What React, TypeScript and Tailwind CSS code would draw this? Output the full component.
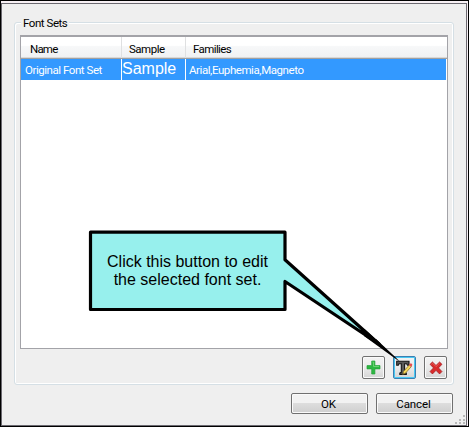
import type { ReactNode } from 'react';

function PlusIcon() {
  return (
    <svg width="15" height="15" viewBox="0 0 15 15">
      <path d="M5.7 1h3.2v4.6H14v3.3H8.9V14H5.7V8.9H1V5.6h4.7z" fill="#2db742" stroke="#24a238" strokeWidth=".7" />
      <path d="M6.5 2h1v4.5H13" fill="none" stroke="#68d36e" strokeWidth="1" />
    </svg>
  );
}

function EditFontIcon() {
  return (
    <svg width="17" height="16" viewBox="0 0 17 16">
      <path d="M.7 1.2h12.3v4h-1.6l-.7-1.5H8.6v8.6l1.7.8v1.3H3.8v-1.3l1.5-.8V3.7H3L2.3 5.2H.7z" fill="#595959" stroke="#151515" strokeWidth="1.1" />
      <path d="M6.7 14.6l.7-3 6-6.8 2 1.7-6 6.8z" fill="#f4d85b" stroke="#7e601d" strokeWidth=".7" />
      <path d="M13 5l.9-1.4h1.6l.8.8-.3 1.4-1 .9z" fill="#e74b4f" />
      <path d="M6.7 14.6l.3-1.4 1.2 1z" fill="#222" />
    </svg>
  );
}

function DeleteIcon() {
  return (
    <svg width="14" height="14" viewBox="0 0 13 13">
      <path d="M3.2 1l3.3 3.2L9.8 1 12 3.1 8.8 6.4 12 9.8 9.8 12 6.5 8.7 3.2 12 1 9.8l3.2-3.4L1 3.1z" fill="#d92b2b" stroke="#a81d22" strokeWidth=".8" />
      <path d="M2.2 3.2l1.2-1.1 3.1 3.1 3.2-3.1" fill="none" stroke="#eb6460" strokeWidth=".8" />
    </svg>
  );
}

function IconButton({ children, selected = false, label }: { children: ReactNode; selected?: boolean; label: string }) {
  return (
    <button
      aria-label={label}
      className={`flex h-[23px] w-[23px] items-center justify-center rounded-[2px] border bg-gradient-to-b from-[#f3f3f3] via-[#ebebeb] to-[#d5d5d5] ${
        selected ? 'border-[#3c7fb1] shadow-[inset_0_0_0_1px_#48c8f3]' : 'border-[#707070] shadow-[inset_0_0_0_1px_#fafafa]'
      }`}
    >
      {children}
    </button>
  );
}

function TextButton({ children }: { children: ReactNode }) {
  return (
    <button className="flex h-[21px] w-[77px] items-center justify-center rounded-[2px] border border-[#707070] bg-gradient-to-b from-[#f2f2f2] from-45% via-[#dddddd] via-50% to-[#cfcfcf] pr-[2px] pt-px tracking-[-0.1px] shadow-[inset_0_0_0_1px_#fafafa]">
      {children}
    </button>
  );
}

export default function App() {
  return (
    <div className="relative h-[427px] w-[469px] overflow-hidden border border-black bg-[#f7f0f4] pt-[2px] pr-px font-['Roboto','Liberation_Sans',sans-serif] text-[11.5px] leading-[14px] text-black">
      <div className="h-[423px] border border-[#6b6970] bg-[#efefef] pt-[18px] pl-[12px]">
        <section className="relative h-[363px] w-[440px] rounded-[3px] border border-[#d5dfe5] pt-[12px] pl-[5px] shadow-[inset_1px_1px_0_#fff,inset_-1px_-1px_0_#fff]">
          <h1 className="absolute -top-[7px] left-[6px] bg-[#efefef] px-[2px] whitespace-nowrap tracking-[-0.45px]">Font Sets</h1>
          <div className="h-[314px] w-[428px] border border-t-2 border-[#a3a3a8] bg-white">
            <div className="flex h-[22px] items-center border-b border-[#a0a0a0] bg-gradient-to-b from-white from-40% via-[#f7f8f9] via-45% to-[#f0f1f2] shadow-[inset_0_-1px_0_#d8d8d8]">
              <span className="flex h-full w-[101px] items-center border-r border-[#dfe0e1] pl-[9px] pt-[2px] tracking-[-0.8px]">Name</span>
              <span className="flex h-full w-[64px] items-center border-r border-[#dfe0e1] pl-[7px] pt-[2px] tracking-[-0.5px]">Sample</span>
              <span className="flex h-full flex-1 items-center pl-[7px] pt-[2px] tracking-[-0.6px]">Families</span>
            </div>
            <div className="mr-px flex h-[21px] bg-[#3399ff] text-white">
              <span className="flex w-[101px] items-center border-r border-white pl-[4px] pt-px whitespace-nowrap tracking-[-0.45px]">Original Font Set</span>
              <span className="w-[64px] border-r border-white font-['Liberation_Sans',sans-serif] text-[16px] leading-[19px]">Sample</span>
              <span className="flex flex-1 items-center pl-[3px] pt-px tracking-[-0.43px]">Arial,Euphemia,Magneto</span>
            </div>
          </div>
          <div className="mt-[7px] mr-[6px] flex justify-end gap-[8px]">
            <IconButton label="Add"><PlusIcon /></IconButton>
            <IconButton label="Edit" selected><EditFontIcon /></IconButton>
            <IconButton label="Delete"><DeleteIcon /></IconButton>
          </div>
        </section>
        <div className="mt-[8px] mr-[13px] flex justify-end gap-[8px]">
          <TextButton>OK</TextButton>
          <TextButton>Cancel</TextButton>
        </div>
      </div>
      <svg className="absolute -top-px -left-px" width="469" height="427" viewBox="0 0 469 427">
        <path d="M90.5 232.2H285v27.6L379 344l-94-62.5v28H90.5z" fill="#97f0ed" stroke="#000" strokeWidth="3.2" strokeLinejoin="round" />
        <path d="M365 329.4L400 362l-36-26z" />
        <path d="M376 339l24 22.5-25.5-18.7z" />
        <g fill="#b8b8b8"><path d="M463 415h2v2h-2zM459 419h2v2h-2zM463 419h2v2h-2zM455 422h2v2h-2zM459 422h2v2h-2zM463 422h2v2h-2z" /></g>
      </svg>
      <p className="absolute top-[252px] left-[89px] w-[195px] text-center font-['Liberation_Sans',sans-serif] text-[16px] leading-[18px]">
        Click this button to edit<br />the selected font set.
      </p>
    </div>
  );
}
